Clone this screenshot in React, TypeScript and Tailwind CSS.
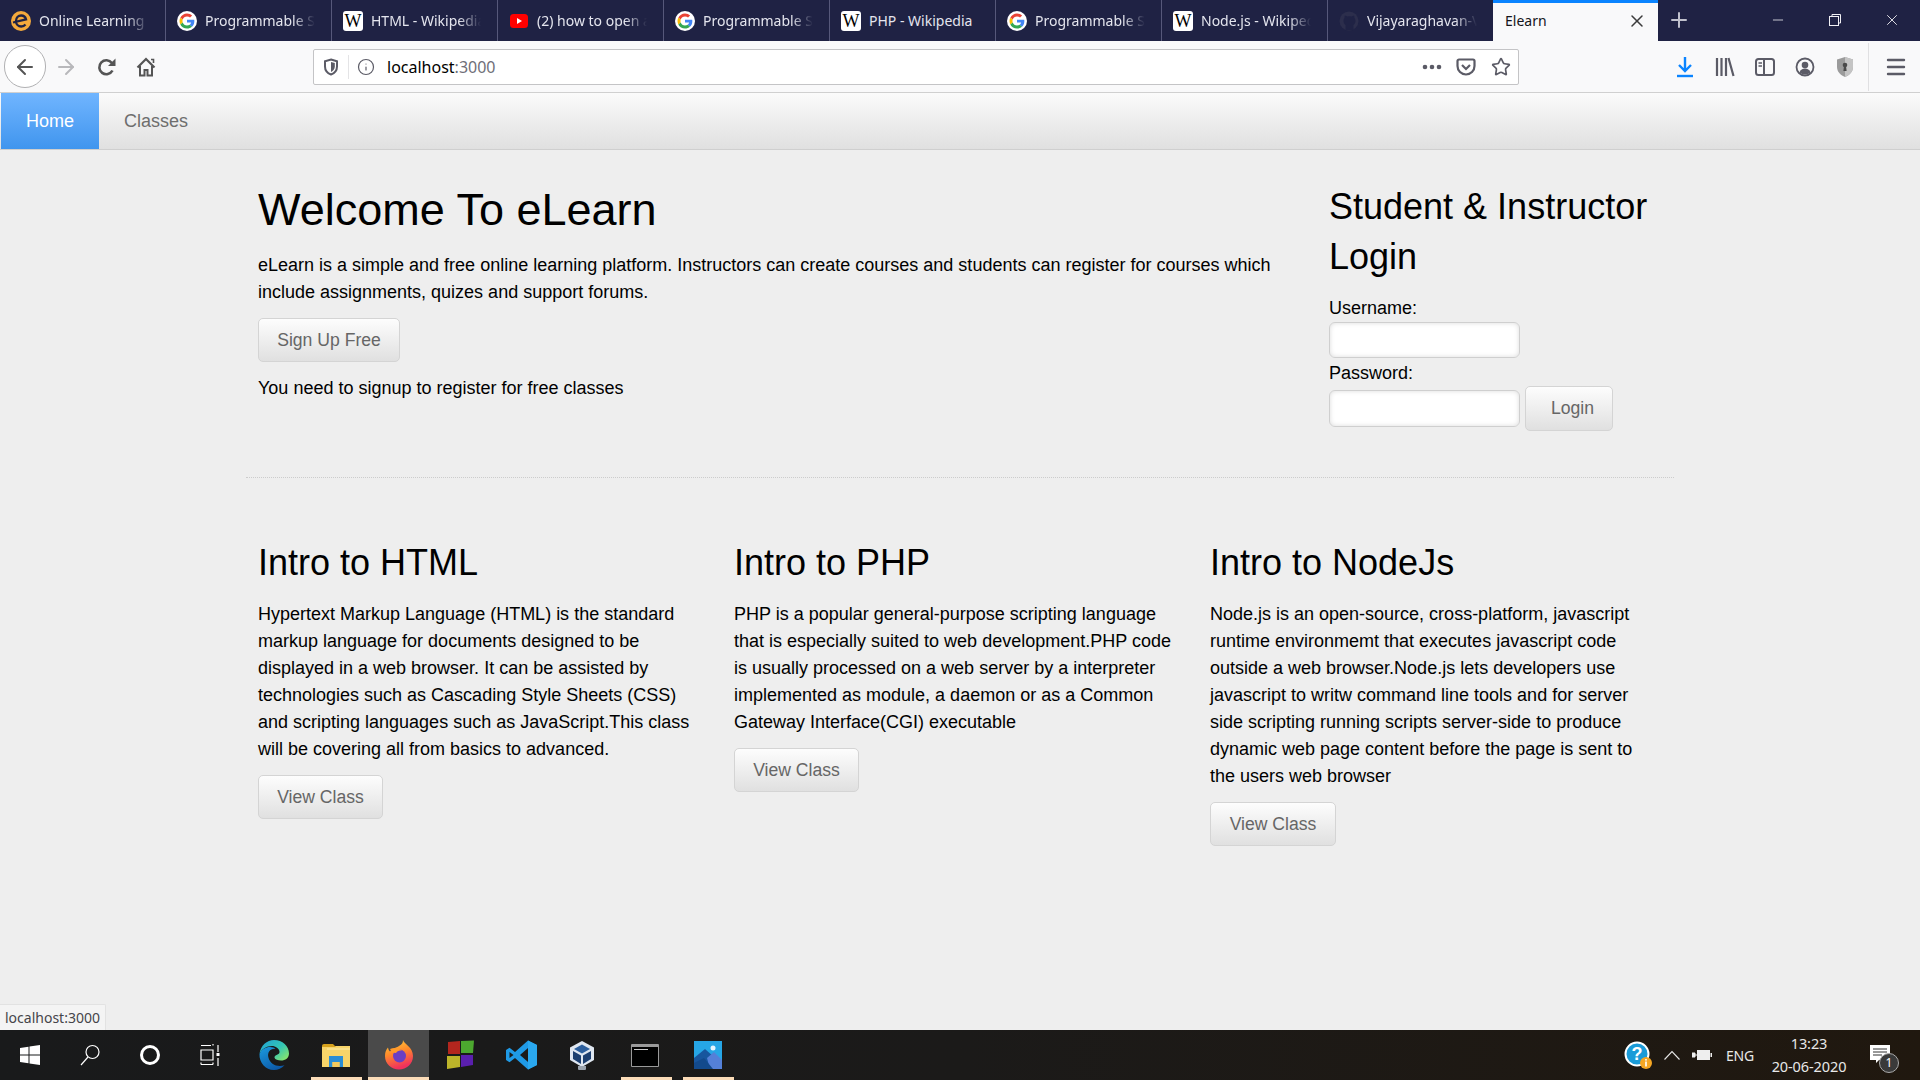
import React from "react";
import { ArrowLeft, ArrowRight, Info, Star, X, Plus, Menu, Minus } from "lucide-react";

const GoogleG = () => (
  <svg width="20" height="20" viewBox="0 0 48 48" className="shrink-0">
    <circle cx="24" cy="24" r="24" fill="#fff" />
    <path fill="#EA4335" d="M24 13c3 0 5.400 1 7.300 2.800l5-5C33.200 7.800 29 6 24 6 17 6 10.900 10 8 15.900l5.800 4.500C15.200 16.100 19.200 13 24 13z" />
    <path fill="#4285F4" d="M41.600 24.500c0-1.300-.1-2.300-.3-3.500H24v6.800h10c-.4 2.400-1.800 4.400-3.800 5.800l5.700 4.400c3.500-3.200 5.700-7.900 5.700-13.500z" />
    <path fill="#FBBC05" d="M13.800 27.600c-.4-1.100-.6-2.300-.6-3.600s.2-2.500.6-3.600L8 15.900C6.700 18.300 6 21.100 6 24s.7 5.700 2 8.100l5.800-4.500z" />
    <path fill="#34A853" d="M24 42c4.900 0 9-1.600 11.900-4.400l-5.700-4.400c-1.600 1.100-3.600 1.800-6.200 1.800-4.800 0-8.800-3.100-10.200-7.400L8 32.100C10.900 38 17 42 24 42z" />
  </svg>
);
const WikiW = () => (
  <span className="flex h-[20px] w-[20px] shrink-0 items-center justify-center rounded-[3px] bg-white text-[18px] leading-none text-black [font-family:'Liberation_Serif',serif]">W</span>
);
const YouTube = () => (
  <svg width="20" height="20" viewBox="0 0 20 20" className="shrink-0">
    <rect x="1" y="3" width="18" height="14" rx="3.500" fill="#f00" />
    <path d="M8 7l5 3-5 3z" fill="#fff" />
  </svg>
);
const ELogo = () => (
  <svg width="20" height="20" viewBox="0 0 20 20" className="shrink-0">
    <circle cx="10" cy="10" r="10" fill="#f4a93c" />
    <path d="M2 11.500l13-3.200c-.6-2.300-2.500-3.800-4.800-3.800-3 0-5.200 2.400-5.200 5.500s2.300 5.500 5.200 5.500c1.800 0 3.300-.8 4.300-2" stroke="#1f2244" strokeWidth="2.300" fill="none" />
  </svg>
);
const GitHubDim = () => (
  <svg width="20" height="20" viewBox="0 0 20 20" className="shrink-0">
    <circle cx="10" cy="10" r="9.500" fill="#2c2e4c" />
    <path d="M6.500 19v-5c-1.200-1-2-2.200-2-4 0-1.200.3-2.200 1-3 0-1 0-2 .4-2.600 1 .1 2 .7 2.700 1.100 1.200-.3 2.600-.3 3.800 0 .7-.4 1.700-1 2.700-1.100.4.600.4 1.600.4 2.600.7.800 1 1.800 1 3 0 1.800-.8 3-2 4v5z" fill="#1f2244" />
  </svg>
);

type TabInfo = { icon: React.ReactNode; title: string; last?: boolean; fits?: boolean };
const tabs: TabInfo[] = [
  { icon: <ELogo />, title: "Online Learning Courses" },
  { icon: <GoogleG />, title: "Programmable Search" },
  { icon: <WikiW />, title: "HTML - Wikipedia page" },
  { icon: <YouTube />, title: "(2) how to open a file" },
  { icon: <GoogleG />, title: "Programmable Search" },
  { icon: <WikiW />, title: "PHP - Wikipedia", fits: true },
  { icon: <GoogleG />, title: "Programmable Search" },
  { icon: <WikiW />, title: "Node.js - Wikipedia" },
  { icon: <GitHubDim />, title: "Vijayaraghavan-Vashist", last: true },
];

function Tab({ icon, title, last, fits }: TabInfo) {
  return (
    <div className={`flex h-[41px] shrink-0 items-center gap-[8px] pl-[11px] pr-[16px] ${last ? "w-[165px]" : "w-[166px] border-r border-[#56587a]"}`}>
      {icon}
      <span className={`min-w-0 flex-1 overflow-hidden whitespace-nowrap text-[14px] text-[#e4e5ee] ${fits ? "" : "[mask-image:linear-gradient(to_right,black_80%,transparent_100%)]"}`}>
        {title}
      </span>
    </div>
  );
}

function Browser() {
  return (
    <>
      <div className="flex h-[41px] bg-[#1f2244] [font-family:'Noto_Sans',sans-serif]">
        {tabs.map((t, i) => (
          <Tab key={i} {...t} />
        ))}
        <div className="flex h-[41px] w-[165px] shrink-0 items-center border-t-[3px] border-[#0a84ff] bg-[#f9f9fa] pb-[3px] pl-[12px] pr-[11px] text-[14px] text-[#15141a]">
          <span className="flex-1">Elearn</span>
          <X size={20} strokeWidth={1.800} className="text-[#3b3b3b]" />
        </div>
        <div className="flex w-[42px] items-center justify-center pb-[2px]">
          <Plus size={24} strokeWidth={2} className="text-[#c0c1cd]" />
        </div>
        <div className="flex flex-1 items-center justify-end pb-[2px] text-[#f0f0f4]">
          <div className="flex w-[57px] justify-center"><Minus size={16} strokeWidth={1.200} /></div>
          <div className="flex w-[57px] justify-center">
            <svg width="12" height="12" viewBox="0 0 12 12" fill="none" stroke="currentColor">
              <rect x=".5" y="2.500" width="9" height="9" />
              <path d="M3 2.500V.5h8.500V9H9.500" />
            </svg>
          </div>
          <div className="flex w-[57px] justify-center"><X size={18} strokeWidth={1.200} /></div>
        </div>
      </div>
      <div className="flex h-[52px] items-center border-b border-[#d0d0d0] bg-[#f9f9fa] text-[#5b5b66]">
        <div className="ml-[4px] flex h-[43px] w-[42px] items-center justify-center rounded-full border border-[#b1b1b3] bg-white">
          <ArrowLeft size={24} strokeWidth={2} className="text-[#555]" />
        </div>
        <ArrowRight size={24} strokeWidth={2} className="ml-[8px] text-[#b8b8bb]" />
        <svg width="20" height="20" viewBox="0 0 20 20" fill="none" className="ml-[19px]">
          <path d="M15.500 13.500a7 7 0 1 1-.6-7.500" stroke="#555" strokeWidth="2.600" />
          <path d="M18.500 1.500v7.500H11z" fill="#555" />
        </svg>
        <svg width="20" height="20" viewBox="0 0 20 20" fill="none" className="ml-[19px]">
          <path d="M1.500 10.500L10 2l8.500 8.500" stroke="#555" strokeWidth="2.200" />
          <path d="M4 9v9.500h4.500V13h3v5.500H16V9" stroke="#555" strokeWidth="2" />
          <path d="M15 2.500h2.500V6" stroke="#555" strokeWidth="1.600" />
        </svg>
        <div className="ml-[157px] flex h-[36px] w-[1206px] items-center rounded-[2px] border border-[#c4c4c6] bg-white">
          <svg width="16" height="18" viewBox="0 0 16 18" className="ml-[9px]">
            <path d="M8 1.500l6 1.800v5.200c0 4-2.700 6.800-6 8-3.300-1.200-6-4-6-8V3.300z" fill="none" stroke="#5b5b66" strokeWidth="2" />
            <path d="M8 4l3.800 1v3.500c0 2.500-1.600 4.300-3.800 5.400z" fill="#5b5b66" />
          </svg>
          <div className="ml-[9px] h-[24px] w-px bg-[#e4e4e6]" />
          <Info size={18} strokeWidth={1.600} className="ml-[8px] text-[#5b5b66]" />
          <span className="ml-[12px] text-[16px] text-black [font-family:'Noto_Sans',sans-serif]">
            localhost<span className="text-[#6f6f78]">:3000</span>
          </span>
          <div className="flex-1" />
          <svg width="20" height="6" viewBox="0 0 20 6" fill="#5b5b66"><circle cx="3" cy="3" r="2.300" /><circle cx="10" cy="3" r="2.300" /><circle cx="17" cy="3" r="2.300" /></svg>
          <svg width="20" height="18" viewBox="0 0 20 18" className="ml-[14px]" fill="none" stroke="#5b5b66" strokeWidth="2.200">
            <path d="M3 1.500h14a1.500 1.500 0 0 1 1.500 1.500v5a8.500 8.500 0 0 1-17 0V3A1.500 1.500 0 0 1 3 1.500z" />
            <path d="M6 7l4 4 4-4" />
          </svg>
          <Star size={20} strokeWidth={2} className="ml-[15px] mr-[7px] text-[#5b5b66]" />
        </div>
        <svg width="18" height="22" viewBox="0 0 18 22" className="ml-[157px]" fill="none" stroke="#0a84ff" strokeWidth="2.400">
          <path d="M9 1v13M3 9l6 6 6-6" />
          <path d="M1 20h16" />
        </svg>
        <svg width="20" height="20" viewBox="0 0 20 20" className="ml-[21px]" fill="none" stroke="#5b5b66" strokeWidth="2.200">
          <path d="M2 1v18M6.500 1v18M11 1v18M13.500 1l5 18" />
        </svg>
        <svg width="20" height="20" viewBox="0 0 20 20" className="ml-[20px]" fill="none" stroke="#5b5b66" strokeWidth="2">
          <rect x="1" y="2" width="18" height="16" rx="2.500" />
          <path d="M9 2v16" />
          <path d="M3.500 6H7M3.500 9H7" strokeWidth="1.400" />
        </svg>
        <svg width="20" height="20" viewBox="0 0 20 20" className="ml-[20px]">
          <circle cx="10" cy="10" r="8.500" fill="none" stroke="#5b5b66" strokeWidth="1.800" />
          <circle cx="10" cy="8" r="3.300" fill="#5b5b66" />
          <path d="M4.500 15.500c1-3 3-4 5.500-4s4.500 1 5.500 4c-3 2.500-8 2.500-11 0z" fill="#5b5b66" />
        </svg>
        <svg width="20" height="22" viewBox="0 0 20 22" className="ml-[20px]">
          <path d="M10 1l8 2.500V11c0 5-4 8.500-8 10-4-1.500-8-5-8-10V3.500z" fill="#9b9b9b" />
          <path d="M10 1l8 2.500V11c0 5-4 8.500-8 10z" fill="#c4c4c4" />
          <circle cx="10" cy="9" r="2.300" fill="#4a4a4a" />
          <path d="M9 10h2l.6 5H8.400z" fill="#4a4a4a" />
        </svg>
        <div className="ml-[13px] h-[48px] w-px bg-[#e0e0e2]" />
        <Menu size={24} strokeWidth={2.400} className="ml-[15px]" />
      </div>
    </>
  );
}

function Btn({ children, w, h = 44, cls = "" }: { children: React.ReactNode; w: string; h?: number; cls?: string }) {
  return (
    <button className={`${w} ${cls} rounded-[5px] border border-[#d4d4d4] bg-gradient-to-b from-[#fdfdfd] to-[#e0e0e0] text-[17.600px] text-[#666]`} style={{ height: h }}>
      {children}
    </button>
  );
}

function Field({ h }: { h: string }) {
  return <input className={`block w-[191px] ${h} rounded-[6px] border border-[#cfcfcf] bg-white shadow-[inset_0_0_5px_rgba(0,0,0,0.14)]`} />;
}

const cards = [
  {
    title: "Intro to HTML",
    w: "w-[125px]",
    lines: "Hypertext Markup Language (HTML) is the standard markup language for documents designed to be displayed in a web browser. It can be assisted by technologies such as Cascading Style Sheets (CSS) and scripting languages such as JavaScript.This class will be covering all from basics to advanced.",
  },
  {
    title: "Intro to PHP",
    w: "w-[125px]",
    lines: "PHP is a popular general-purpose scripting language that is especially suited to web development.PHP code is usually processed on a web server by a interpreter implemented as module, a daemon or as a Common Gateway Interface(CGI) executable",
  },
  {
    title: "Intro to NodeJs",
    w: "w-[126px]",
    lines: "Node.js is an open-source, cross-platform, javascript runtime environmemt that executes javascript code outside a web browser.Node.js lets developers use javascript to writw command line tools and for server side scripting running scripts server-side to produce dynamic web page content before the page is sent to the users web browser",
  },
];

function Page() {
  return (
    <div className="relative flex-1 overflow-hidden bg-[#eeeeee] text-[18px] leading-[27px] text-black [font-family:'Liberation_Sans',sans-serif]">
      <nav className="flex h-[57px] border-b border-[#cfcfcf] bg-gradient-to-b from-[#fbfbfb] to-[#e0e0e0]">
        <a className="ml-px flex w-[98px] items-center justify-center bg-gradient-to-b from-[#70b5ff] to-[#3f95ee] text-white">Home</a>
        <a className="flex w-[114px] items-center justify-center text-[#6e6e6e]">Classes</a>
      </nav>
      <div className="ml-[246px] w-[1428px]">
        <div className="flex h-[328px] items-start border-b border-dotted border-[#cccccc] pl-[12px] pt-[35px]">
          <div className="w-[1071px]">
            <h1 className="mb-[17px] text-[45px] leading-[50px]">Welcome To eLearn</h1>
            <p className="w-[1030px]">eLearn is a simple and free online learning platform. Instructors can create courses and students can register for courses which include assignments, quizes and support forums.</p>
            <Btn w="w-[142px]" cls="mt-[12px] block">Sign Up Free</Btn>
            <p className="mt-[13px]">You need to signup to register for free classes</p>
          </div>
          <div className="-mt-[3px] w-[335px]">
            <h2 className="text-[36px] leading-[50px]">Student &amp; Instructor Login</h2>
            <label className="mt-[13px] block h-[27px]">Username:</label>
            <Field h="h-[36px]" />
            <label className="mt-[2px] block h-[26px]">Password:</label>
            <div className="flex items-center gap-[5px]">
              <Field h="h-[37px]" />
              <Btn w="w-[88px]" h={45} cls="pl-[7px]">Login</Btn>
            </div>
          </div>
        </div>
        <div className="flex pt-[60px]">
          {cards.map((c) => (
            <div key={c.title} className="w-[476px] shrink-0 pl-[12px] pr-[24px]">
              <h2 className="mb-[13px] text-[36px] leading-[50px]">{c.title}</h2>
              <p>{c.lines}</p>
              <Btn w={c.w} cls="mt-[12px]">View Class</Btn>
            </div>
          ))}
        </div>
      </div>
      <div className="absolute bottom-0 left-0 flex h-[26px] w-[106px] items-center rounded-tr-[2px] border-r border-t border-[#e2e2e2] bg-[#f4f4f4] pl-[5px] text-[14px] text-[#45454a] [font-family:'Noto_Sans',sans-serif]">
        localhost:3000
      </div>
    </div>
  );
}

function Item({ w, children, active, under }: { w: string; children: React.ReactNode; active?: boolean; under?: string }) {
  return (
    <div className={`relative flex h-full ${w} shrink-0 items-center justify-center ${active ? "bg-[#4a4a4a]" : ""}`}>
      {children}
      {under && <div className={`absolute bottom-0 h-[3px] bg-[#fbdcb8] ${under}`} />}
    </div>
  );
}

function Taskbar() {
  return (
    <div className="flex h-[50px] items-center bg-gradient-to-r from-[#191a1b] via-[#1b1a19] to-[#20180f] text-white [font-family:'Noto_Sans',sans-serif]">
      <Item w="w-[60px]">
        <svg width="20" height="20" viewBox="0 0 20 20" fill="#fff"><path d="M0 3l8.500-1.300v7.800H0zM9.500 1.500L20 0v9.500H9.500zM0 10.500h8.500v7.800L0 17zM9.500 10.500H20V20L9.500 18.500z" /></svg>
      </Item>
      <Item w="w-[60px]">
        <svg width="20" height="22" viewBox="0 0 20 22" fill="none" stroke="#fff" strokeWidth="1.200"><circle cx="12.500" cy="8" r="6.500" /><path d="M8 13l-7 8" /></svg>
      </Item>
      <Item w="w-[60px]">
        <div className="h-[20px] w-[20px] rounded-full border-[3px] border-white" />
      </Item>
      <Item w="w-[60px]">
        <svg width="20" height="22" viewBox="0 0 20 22" fill="none" stroke="#fff" strokeWidth="1.200">
          <path d="M1 1.500h10M1 6h12v10H1zM1 20.500h12M1 20.500v-2M13 20.500v-2M13 1.500V0M18 1v7M18 14v8" />
          <rect x="16.500" y="9" width="3" height="3" fill="#fff" stroke="none" />
        </svg>
      </Item>
      <Item w="w-[68px]">
        <svg width="30" height="30" viewBox="0 0 30 30">
          <defs>
            <linearGradient id="edge1" x1="0" y1="0" x2="1" y2=".8"><stop offset="0" stopColor="#1e9fd8" /><stop offset=".6" stopColor="#34c6b4" /><stop offset="1" stopColor="#86e36e" /></linearGradient>
            <linearGradient id="edge2" x1="0" y1="0" x2=".6" y2="1"><stop offset="0" stopColor="#1a9be0" /><stop offset="1" stopColor="#0d5aa8" /></linearGradient>
          </defs>
          <path d="M.5 14C1.500 5.500 8 0 15 0c8.500 0 15 6 15 13.500 0 4.500-3.500 7-8 7-3 0-6-1-6.500-2.800 0-3.700 5.200-2.200 5-6C20.300 8.500 16.500 6 13 6 7.500 6 2.500 9 .5 14z" fill="url(#edge1)" />
          <path d="M.5 14C2.500 9 7 7 11 7c2.500 0 4.500.7 5.500 1.800-5.500-.6-8.500 4-7 9 1.500 6 8.500 10 16 7.500-2.700 3-6.500 4.700-10.500 4.700C6.500 30 0 22.500.5 14z" fill="url(#edge2)" />
        </svg>
      </Item>
      <Item w="w-[60px]" under="left-[3px] right-[6px]">
        <svg width="28" height="23" viewBox="0 0 28 23" className="mr-[4px]">
          <path d="M0 2h28v21H0z" fill="#f7d469" />
          <path d="M0 2a2 2 0 0 1 2-2h9l3 3H0z" fill="#d6a11d" />
          <path d="M5 4h23v2H5z" fill="#f9e08a" />
          <path d="M7 23V12h14v11h-3.500v-5h-7v5z" fill="#2a8dd4" />
          <rect x="10.500" y="18" width="7" height="5" fill="#f4c95b" />
        </svg>
      </Item>
      <Item w="w-[61px]" active under="left-0 right-0">
        <svg width="30" height="30" viewBox="0 0 30 30">
          <defs>
            <linearGradient id="ff" x1="0" y1="0" x2=".3" y2="1"><stop offset="0" stopColor="#ffd23a" /><stop offset=".5" stopColor="#ff8a2b" /><stop offset="1" stopColor="#f0315d" /></linearGradient>
          </defs>
          <path d="M19 0c1 4 10 7 10 16 0 8-6.500 13.500-14 13.500S1 24 1 16c0-4 1-6 3-8.500.3 2 1 3 2 4 2-3 6-3.500 9-5.500 3-2 4-3 4-6z" fill="url(#ff)" />
          <circle cx="15.500" cy="16" r="6.500" fill="#6a3fc4" />
          <path d="M6 9c4-2 9-1 12 1.500-3 0-5 .5-6 2.500-2.500 0-5-1.500-6-4z" fill="#ff9a2b" />
        </svg>
      </Item>
      <Item w="w-[62px]">
        <svg width="28" height="30" viewBox="0 0 28 30">
          <path d="M2 2l12-1v13H2z" fill="#b3261e" />
          <path d="M15 1l13-.5L27 13H15z" fill="#4ca82f" />
          <path d="M1 16h13v11L1 29z" fill="#bdb52a" />
          <path d="M15 15h12v10l-12 2z" fill="#5a1fae" />
        </svg>
      </Item>
      <Item w="w-[61px]">
        <svg width="31" height="30" viewBox="0 0 31 30">
          <path d="M22 .5L31 5v20l-9 4.500-13-11.500-5.500 4.200L0 20v-10l3.500-2.200L9 12z" fill="#1f9ae6" />
          <path d="M22 8l-8 7 8 7z" fill="#1b1a19" />
          <path d="M3.500 12l4 3-4 3z" fill="#1b1a19" />
          <path d="M22 .5L31 5v20l-9 4.500z" fill="#2aa8ef" />
        </svg>
      </Item>
      <Item w="w-[60px]">
        <svg width="26" height="30" viewBox="0 0 26 30">
          <path d="M13 1l12 6.500V20l-12 7L1 20V7.500z" fill="#dfe7f1" />
          <path d="M13 4.500l8 4.500-8 4.500L5 9z" fill="#2c5f9e" />
          <path d="M4 11l8 4.500V24l-8-5zM22 11l-8 4.500V24l8-5z" fill="#1c3f70" />
          <path d="M9 26h8v3a4 1.500 0 0 1-8 0z" fill="#9aa3ae" />
        </svg>
      </Item>
      <Item w="w-[66px]" under="left-[9px] right-[6px]">
        <div className="h-[23px] w-[28px] rounded-[1px] border border-[#9a9a9a] border-t-[3px] bg-black">
          <div className="ml-[2px] mt-[2px] h-[1px] w-[14px] bg-[#cccccc]" />
        </div>
        <div className="absolute bottom-0 right-[6px] h-[3px] w-[10px] bg-[#c9a98a]" />
      </Item>
      <Item w="w-[60px]" under="left-[5px] right-[4px]">
        <svg width="28" height="28" viewBox="0 0 28 28">
          <rect width="28" height="28" fill="#26a6e6" />
          <circle cx="19" cy="7" r="2.500" fill="#e6f6ff" />
          <path d="M0 28V17l11-9 9 8-4 12z" fill="#17569e" />
          <path d="M13 17l7-6 8 8v9H16z" fill="#5480d8" />
          <path d="M0 28V22l10-5 9 11z" fill="#134a8c" />
        </svg>
      </Item>
      <div className="flex-1" />
      <svg width="28" height="28" viewBox="0 0 28 28" className="mr-[12px]">
        <circle cx="13" cy="13" r="11.500" fill="#1a9bd8" stroke="#fff" strokeWidth="2" />
        <text x="13" y="19" textAnchor="middle" fontSize="18" fontWeight="700" fill="#fff" fontFamily="Liberation Sans">?</text>
        <circle cx="22" cy="22" r="6" fill="#f5a623" />
        <rect x="21.200" y="20.500" width="1.600" height="5" fill="#fff" />
        <rect x="21.200" y="18" width="1.600" height="1.600" fill="#fff" />
      </svg>
      <svg width="16" height="10" viewBox="0 0 16 10" fill="none" stroke="#e8e8e8" strokeWidth="1.100" className="mr-[12px]"><path d="M.5 9.500L8 1.500l7.500 8" /></svg>
      <svg width="20" height="12" viewBox="0 0 20 12" className="mr-[14px]">
        <rect x="5" y="1" width="13" height="10" fill="#eee" />
        <rect x="18.500" y="4" width="1.500" height="4" fill="#eee" />
        <path d="M0 4h3v4H0zM3 6h2" fill="#eee" stroke="#eee" />
      </svg>
      <span className="w-[30px] whitespace-nowrap text-[14px] tracking-[-0.2px] text-[#e8e8e8]">ENG</span>
      <div className="ml-[11px] mr-[19px] flex w-[84px] flex-col items-center whitespace-nowrap text-[14.500px] leading-[23px] tracking-[-0.1px] text-[#e8e8e8]">
        <span>13:23</span>
        <span>20-06-2020</span>
      </div>
      <div className="relative mr-[26px] h-[30px] w-[24px]">
        <svg width="20" height="20" viewBox="0 0 20 20" className="absolute top-[5px]" fill="#fff">
          <path d="M0 0h20v15H9l-3 3v-3H0z" />
          <path d="M3 4h14M3 7h14M3 10h9" stroke="#333" strokeWidth="1" />
        </svg>
        <div className="absolute left-[9px] top-[13px] flex h-[20px] w-[20px] items-center justify-center rounded-full border border-[#aaa] bg-[#3a3a3a] text-[12px] leading-none text-white">1</div>
      </div>
    </div>
  );
}

export default function App() {
  return (
    <div className="flex h-[1080px] w-[1920px] flex-col overflow-hidden">
      <Browser />
      <Page />
      <Taskbar />
    </div>
  );
}
